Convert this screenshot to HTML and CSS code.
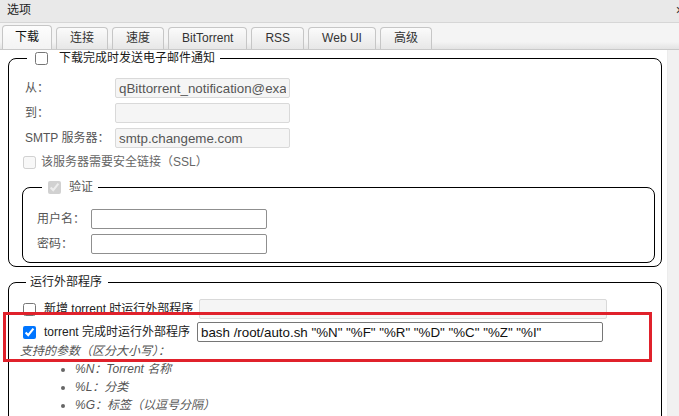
FILE: index.html
```html
<!DOCTYPE html>
<html lang="zh-CN">
<head>
<meta charset="utf-8">
<title>选项</title>
<link rel="stylesheet" href="styles.css">
</head>
<body>
<div class="window">
  <div class="titlebar"><span class="title">选项</span><span class="close">×</span></div>
  <div class="tabs">
    <div class="tab active">下载</div>
    <div class="tab">连接</div>
    <div class="tab">速度</div>
    <div class="tab">BitTorrent</div>
    <div class="tab">RSS</div>
    <div class="tab">Web UI</div>
    <div class="tab">高级</div>
  </div>
  <div class="panel">
    <div class="content">
      <div class="scroll">
        <fieldset class="fs fs-mail">
          <legend class="lg lg-mail"><input type="checkbox" class="cb cb-legend"><span>下载完成时发送电子邮件通知</span></legend>
          <div class="grid grid-mail">
            <label class="lbl dis">从：</label>
            <input type="text" class="txt txt-dis" value="qBittorrent_notification@example.com" disabled>
            <label class="lbl dis">到：</label>
            <input type="text" class="txt txt-dis" value="" disabled>
            <label class="lbl dis">SMTP 服务器：</label>
            <input type="text" class="txt txt-dis" value="smtp.changeme.com" disabled>
          </div>
          <div class="row row-ssl">
            <input type="checkbox" class="cb cb-row" disabled>
            <span class="dis2">该服务器需要安全链接（SSL）</span>
          </div>
          <fieldset class="fs fs-auth">
            <legend class="lg lg-auth"><input type="checkbox" class="cb cb-auth" checked disabled><span class="dis">验证</span></legend>
            <div class="grid grid-auth">
              <label class="lbl dis">用户名：</label>
              <input type="text" class="txt txt-en">
              <label class="lbl dis">密码：</label>
              <input type="password" class="txt txt-en">
            </div>
          </fieldset>
        </fieldset>

        <fieldset class="fs fs-run">
          <legend class="lg lg-run">运行外部程序</legend>
          <div class="row row-run">
            <input type="checkbox" class="cb cb-row">
            <label class="run-label">新增 torrent 时运行外部程序</label>
            <input type="text" class="txt txt-dis txt-run1" disabled>
          </div>
          <div class="row row-run row-run2">
            <input type="checkbox" class="cb cb-row" checked>
            <label class="run-label">torrent 完成时运行外部程序</label>
            <input type="text" class="txt txt-cmd txt-run2" value='bash /root/auto.sh "%N" "%F" "%R" "%D" "%C" "%Z" "%I"'>
          </div>
          <div class="hint">支持的参数（区分大小写）：</div>
          <ul class="params">
            <li>%N：Torrent 名称</li>
            <li>%L：分类</li>
            <li>%G：标签（以逗号分隔）</li>
            <li>%F：内容路径（与多文件 torrent 的根目录相同）</li>
            <li>%R：根目录（第一个 torrent 的子目录路径）</li>
          </ul>
        </fieldset>
      </div>
    </div>
    <div class="scrollbar"></div>
  </div>
  <div class="annotation"></div>
</div>
</body>
</html>
```
FILE: styles.css
```css
* { box-sizing: border-box; }
html, body {
  margin: 0;
  padding: 0;
  width: 679px;
  height: 416px;
  overflow: hidden;
  background: #ffffff;
  font-family: "Liberation Sans", "Noto Sans CJK SC", sans-serif;
  font-size: 12px;
  color: #222;
}
.window {
  position: relative;
  width: 679px;
  height: 416px;
  display: flex;
  flex-direction: column;
  overflow: hidden;
}
.titlebar {
  height: 23px;
  flex: none;
  background: #e9e9e9;
  border-bottom: 1px solid #d6d6d6;
  display: flex;
  align-items: center;
  justify-content: space-between;
  padding-left: 7px;
  font-size: 12px;
  line-height: 18px;
  color: #222;
}
.title { margin-top: -3px; }
.close {
  margin-right: -5px;
  margin-top: -3px;
  font-size: 14px;
  color: #333;
}
.tabs {
  flex: none;
  height: 27px;
  display: flex;
  align-items: flex-end;
  gap: 4px;
  padding-left: 2px;
  background: linear-gradient(#f4f4f4 0, #f4f4f4 72%, #e3e3e3 100%);
  border-bottom: 1px solid #c9c9c9;
}
.tab {
  height: 22px;
  padding: 0 13px;
  border: 1px solid #c6c6c6;
  border-bottom: none;
  border-radius: 4px 4px 0 0;
  background: linear-gradient(#fbfbfb, #e7e7e7);
  color: #333;
  line-height: 20px;
  font-size: 12px;
  white-space: nowrap;
}
.tab.active {
  height: 24px;
  padding: 0 12px;
  background: linear-gradient(#fdfdfd, #f3f3f3);
  line-height: 22px;
  color: #111;
}
.panel {
  flex: 1;
  display: flex;
  min-height: 0;
}
.content {
  flex: 1;
  overflow: hidden;
  background: #fff;
}
.scroll {
  margin-top: -1px;
}
.scrollbar {
  flex: none;
  width: 12px;
  background: #f1f1f1;
  border-left: 1px solid #ececec;
}
.fs {
  border: 1px solid #000;
  border-radius: 8px;
  min-width: 0;
}
.lg {
  line-height: 18px;
  padding: 0 5px 0 4px;
  display: flex;
  align-items: center;
  color: #222;
}
.cb { margin: 0; width: 13px; height: 13px; flex: none; }
.fs-mail {
  margin: 0 5px 0 8px;
  padding: 11px 6px 3px 13px;
}
.lg-mail {
  margin-left: 5px;
  color: #1a1a1a;
}
.cb-legend { margin: 0 11px 0 4px; }
.grid {
  display: grid;
  row-gap: 5px;
  align-items: center;
}
.grid-mail { grid-template-columns: 93px 175px; }
.grid-auth { grid-template-columns: 54px 176px; }
.lbl {
  line-height: 18px;
  white-space: nowrap;
}
.grid-mail .lbl { padding-left: 3px; }
.dis { color: #555; }
.dis2 { color: #666; }
.txt {
  height: 20px;
  border-radius: 2px;
  font-family: "Liberation Sans", "Noto Sans CJK SC", sans-serif;
  font-size: 13.33px;
  padding: 0 3px;
  outline: none;
}
.txt-dis {
  background: #f5f5f5;
  border: 1px solid #d9d9d9;
  color: #555;
}
.txt-en {
  background: #fff;
  border: 1px solid #8f8f8f;
}
.row {
  display: flex;
  align-items: center;
  height: 20px;
  line-height: 18px;
}
.row-ssl { margin-top: 4px; }
.cb-row { margin: 0 5px 0 1px; }
.fs-auth {
  margin: 6px 0 0 0;
  padding: 13px 8px 8px 14px;
}
.lg-auth { margin-left: 5px; }
.cb-auth { margin: 0 8px 0 2px; }
.fs-run {
  margin: 6px 5px 0 8px;
  padding: 8px 6px 10px 13px;
}
.lg-run { margin-left: 4px; padding: 0 6px 0 4px; }
.row-run .cb-row { margin: 0 8px 0 1px; }
.row-run2 { margin-top: 3px; }
.run-label { white-space: nowrap; color: #222; }
.txt-run1 { margin-left: 6px; width: 408px; }
.txt-run2 { margin-left: 7px; width: 406px; }
.txt-cmd {
  background: #fff;
  border: 1px solid #767676;
  color: #111;
}
.hint {
  margin-left: -2px;
  line-height: 18px;
  font-style: italic;
  color: #555;
}
.params {
  margin: 0;
  padding-left: 53px;
  line-height: 18px;
  font-style: italic;
  color: #555;
}
.params li::marker { color: #666; font-style: normal; }
.annotation {
  position: absolute;
  left: 3px;
  top: 312px;
  width: 649px;
  height: 50px;
  border: 3px solid #e0212b;
  pointer-events: none;
}
```
